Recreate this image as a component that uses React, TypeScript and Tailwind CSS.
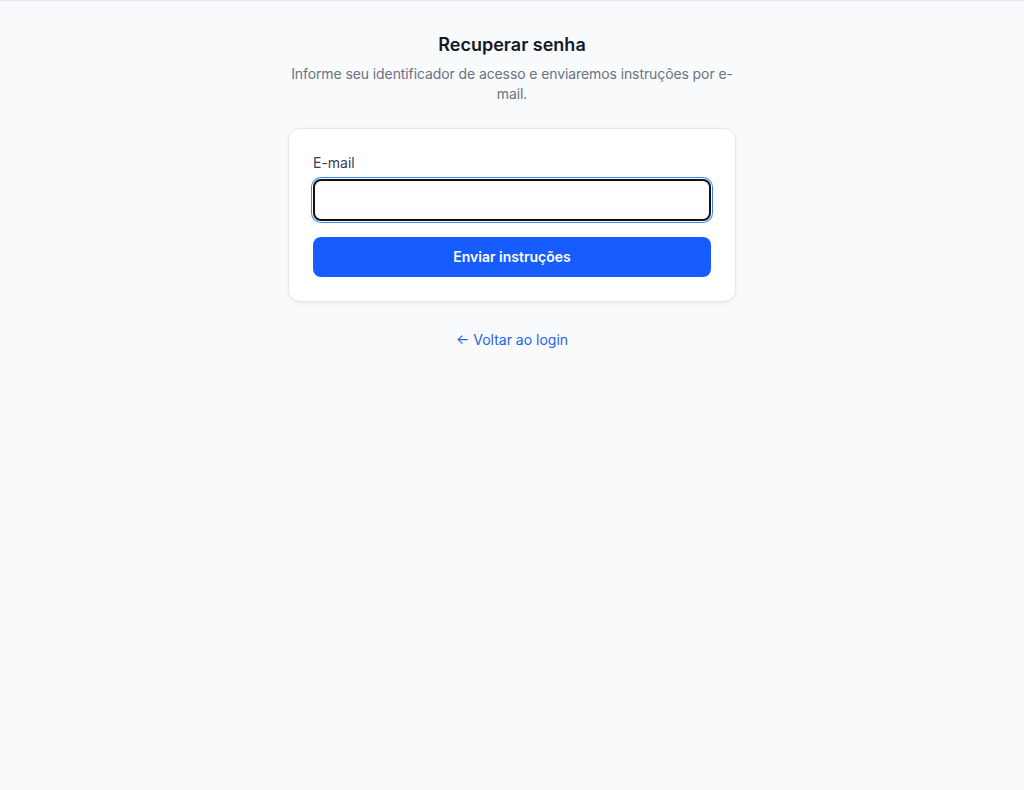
import { useEffect, useRef } from 'react';

const App = () => {
  const emailRef = useRef<HTMLInputElement>(null);

  useEffect(() => {
    emailRef.current?.focus();
  }, []);

  return (
    <div
      className="min-h-[790px] bg-[#f8fafc] text-gray-900"
      style={{ fontFamily: 'Inter, "Noto Sans", sans-serif' }}
    >
      <div className="h-[2px] bg-gradient-to-b from-[#e2e4e8] to-[#f8fafc]" />
      <div className="mx-auto flex w-[448px] flex-col items-center pt-[29px]">
        <h1 className="text-lg leading-7 font-semibold text-[#111827]">Recuperar senha</h1>
        <p className="mt-[5px] text-center text-sm leading-5 tracking-[-0.1px] text-[#6b7280]">
          Informe seu identificador de acesso e enviaremos instruções por e-mail.
        </p>

        <div className="mt-6 w-full rounded-xl border border-[#e5e7eb] bg-white p-6 shadow-[0_1px_3px_rgba(0,0,0,0.08)]">
          <label htmlFor="email" className="block text-sm leading-5 text-[#374151]">
            E-mail
          </label>
          <input
            id="email"
            ref={emailRef}
            type="email"
            className="mt-1.5 block h-[42px] w-full rounded-lg border-2 border-[#111111] bg-white px-3 text-sm outline-none ring-1 ring-[#3b82f6] ring-offset-1 ring-offset-white"
          />
          <button
            type="button"
            className="mt-4 flex h-10 w-full items-center justify-center rounded-lg bg-[#175cff] text-sm font-semibold text-white"
          >
            Enviar instruções
          </button>
        </div>

        <a href="#" className="mt-7 text-sm leading-5 text-[#2563eb]">
          ← Voltar ao login
        </a>
      </div>
    </div>
  );
};

export default App;
